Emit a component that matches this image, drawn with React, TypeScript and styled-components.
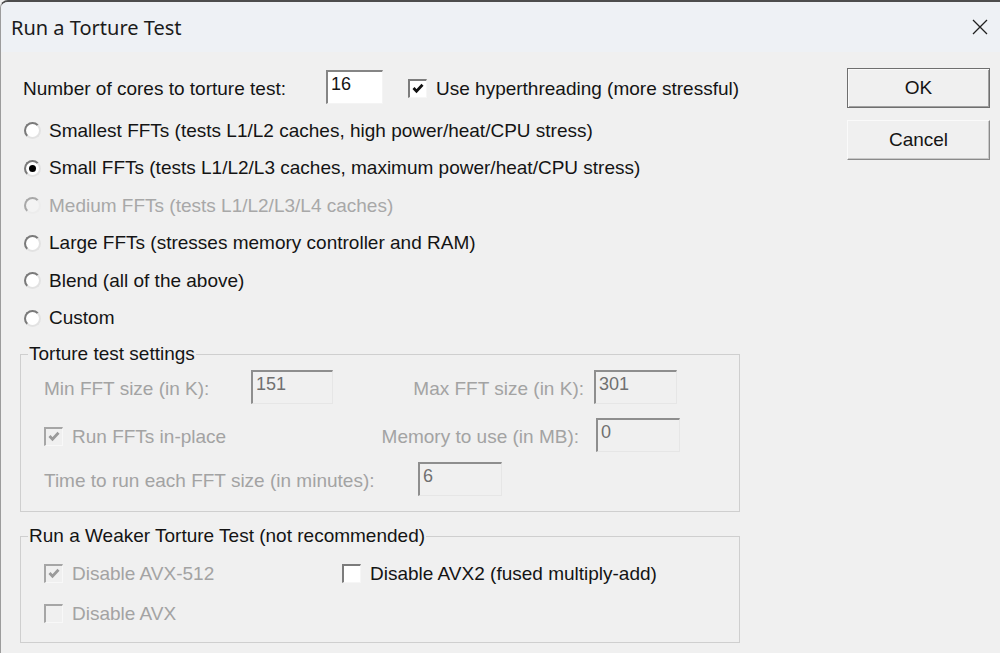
import React from 'react';
import styled, { createGlobalStyle } from 'styled-components';

const GlobalStyle = createGlobalStyle`
  html, body { margin: 0; padding: 0; background: #f0f0f0; }
  body { font-family: "Liberation Sans", Arial, sans-serif; }
`;

const Window = styled.div`
  width: 1000px;
  height: 653px;
  box-sizing: border-box;
  display: flex;
  flex-direction: column;
  overflow: hidden;
  background: #f0f0f0;
  border-top: 2px solid #4d4d4d;
  border-left: 1px solid #9c9c9c;
  border-top-left-radius: 8px;
  font-size: 19px;
  color: #141414;
`;

const TitleBar = styled.header`
  flex: none;
  height: 50px;
  display: flex;
  align-items: center;
  justify-content: space-between;
  padding: 0 12px 0 10px;
  background: #eef1f5;
  font-family: "Noto Sans", "Open Sans", sans-serif;
  font-size: 20px;
  color: #1b1b1b;
`;

const CloseButton = styled.button`
  border: 0;
  background: none;
  padding: 0;
  display: flex;
  color: #202020;
`;

const Body = styled.div`
  flex: 1;
  display: flex;
  padding-right: 10px;
`;

const Main = styled.div`
  width: 720px;
  padding: 18px 0 0 19px;
  display: flex;
  flex-direction: column;
`;

const Buttons = styled.div`
  margin-left: auto;
  width: 143px;
  padding-top: 16px;
  display: flex;
  flex-direction: column;
  gap: 12px;
`;

const Button = styled.button<{ $default?: boolean }>`
  height: 40px;
  box-sizing: border-box;
  background: #f0f0f0;
  font-family: inherit;
  font-size: 19px;
  color: #141414;
  border: 1px solid;
  border-color: ${(p) => (p.$default ? '#6f6f6f' : '#fafafa #8a8a8a #8a8a8a #fafafa')};
  box-shadow: ${(p) =>
    p.$default ? 'inset 1px 1px 0 #fafafa, inset -1px -1px 0 #a0a0a0' : 'inset -1px -1px 0 #c8c8c8'};
`;

const Row = styled.div<{ $indent?: number }>`
  display: flex;
  align-items: center;
  height: 34px;
  padding-left: ${(p) => p.$indent ?? 0}px;
`;

const Label = styled.span<{ $width?: number; $right?: number; $disabled?: boolean }>`
  flex: none;
  width: ${(p) => (p.$width ? `${p.$width}px` : 'auto')};
  box-sizing: border-box;
  text-align: ${(p) => (p.$right !== undefined ? 'right' : 'left')};
  padding-right: ${(p) => p.$right ?? 0}px;
  padding-top: 4px;
  white-space: nowrap;
  color: ${(p) => (p.$disabled ? '#a3a3a3' : '#141414')};
`;

const Field = styled.div<{ $width: number; $disabled?: boolean }>`
  flex: none;
  width: ${(p) => p.$width}px;
  height: 34px;
  box-sizing: border-box;
  padding: 0 3px;
  line-height: 24px;
  font-size: 18px;
  background: ${(p) => (p.$disabled ? '#f0f0f0' : '#ffffff')};
  color: ${(p) => (p.$disabled ? '#707070' : '#141414')};
  border-style: solid;
  border-width: 2px 1px 1px 2px;
  border-color: ${(p) =>
    p.$disabled ? '#8e8e8e #e6e6e6 #e6e6e6 #8e8e8e' : '#858585 #f4f4f4 #f4f4f4 #858585'};
`;

const CheckItem = styled.label<{ $width?: number; $gap?: number }>`
  flex: none;
  display: flex;
  align-items: center;
  gap: ${(p) => p.$gap ?? 9}px;
  width: ${(p) => (p.$width ? `${p.$width}px` : 'auto')};
`;

const Box = styled.span<{ $disabled?: boolean }>`
  flex: none;
  width: 19px;
  height: 19px;
  margin-top: 2px;
  box-sizing: border-box;
  display: flex;
  align-items: center;
  justify-content: center;
  background: ${(p) => (p.$disabled ? '#f0f0f0' : '#ffffff')};
  border-style: solid;
  border-width: 2px 1px 1px 2px;
  border-color: ${(p) =>
    p.$disabled ? '#a6a6a6 #f8f8f8 #f8f8f8 #a6a6a6' : '#7c7c7c #f6f6f6 #f6f6f6 #7c7c7c'};
  color: ${(p) => (p.$disabled ? '#9a9a9a' : '#111')};
`;

const RadioList = styled.div`
  margin-top: 8px;
  display: flex;
  flex-direction: column;
`;

const RadioRow = styled.label<{ $disabled?: boolean }>`
  height: 37.5px;
  display: flex;
  align-items: center;
  gap: 8px;
  padding-left: 4px;
  white-space: nowrap;
  color: ${(p) => (p.$disabled ? '#a8a8a8' : '#141414')};
`;

const Radio = styled.span<{ $checked?: boolean; $disabled?: boolean }>`
  flex: none;
  position: relative;
  width: 17px;
  height: 17px;
  box-sizing: border-box;
  border-radius: 50%;
  background: ${(p) => (p.$disabled ? '#f3f3f3' : '#ffffff')};
  border: 2px solid;
  border-color: ${(p) =>
    p.$disabled ? '#a8a8a8 #ececec #ececec #a8a8a8' : '#7a7a7a #e2e2e2 #e2e2e2 #7a7a7a'};
  &::after {
    content: '';
    display: ${(p) => (p.$checked ? 'block' : 'none')};
    position: absolute;
    left: 50%;
    top: 50%;
    width: 7px;
    height: 7px;
    margin: -3.5px 0 0 -3.5px;
    border-radius: 50%;
    background: #000;
  }
`;

const Group = styled.fieldset<{ $top: number; $pad: string }>`
  margin: ${(p) => p.$top}px 0 0;
  padding: ${(p) => p.$pad};
  border: 1px solid #cfcfcf;
  display: flex;
  flex-direction: column;
  min-width: 0;
`;

const Legend = styled.legend`
  margin-left: -16px;
  padding: 0 1px;
  line-height: 20px;
  color: #141414;
`;

const GroupRows = styled.div<{ $gap: number[] }>`
  display: flex;
  flex-direction: column;
  & > :nth-child(2) { margin-top: ${(p) => p.$gap[0]}px; }
  & > :nth-child(3) { margin-top: ${(p) => p.$gap[1] ?? 0}px; }
`;

const Check = ({ checked, disabled }: { checked?: boolean; disabled?: boolean }) => (
  <Box $disabled={disabled}>
    {checked && (
      <svg width="12" height="11" viewBox="0 0 12 11">
        <path d="M1.5 5 L4.5 8.2 L10.5 1.8" fill="none" stroke="currentColor" strokeWidth="2.8" />
      </svg>
    )}
  </Box>
);

const radios = [
  { text: 'Smallest FFTs (tests L1/L2 caches, high power/heat/CPU stress)' },
  { text: 'Small FFTs (tests L1/L2/L3 caches, maximum power/heat/CPU stress)', checked: true },
  { text: 'Medium FFTs (tests L1/L2/L3/L4 caches)', disabled: true },
  { text: 'Large FFTs (stresses memory controller and RAM)' },
  { text: 'Blend (all of the above)' },
  { text: 'Custom' },
];

const App: React.FC = () => (
  <>
    <GlobalStyle />
    <Window>
      <TitleBar>
        <span>Run a Torture Test</span>
        <CloseButton aria-label="Close">
          <svg width="16" height="16" viewBox="0 0 16 16">
            <path d="M1 1 L15 15 M15 1 L1 15" stroke="currentColor" strokeWidth="1.3" />
          </svg>
        </CloseButton>
      </TitleBar>
      <Body>
        <Main>
          <Row $indent={3}>
            <Label $width={303}>Number of cores to torture test:</Label>
            <Field $width={57}>16</Field>
            <CheckItem style={{ marginLeft: 25 }}>
              <Check checked />
              <Label>Use hyperthreading (more stressful)</Label>
            </CheckItem>
          </Row>

          <RadioList>
            {radios.map((r) => (
              <RadioRow key={r.text} $disabled={r.disabled}>
                <Radio $checked={r.checked} $disabled={r.disabled} />
                <span>{r.text}</span>
              </RadioRow>
            ))}
          </RadioList>

          <Group $top={7} $pad="6px 23px 15px">
            <Legend>Torture test settings</Legend>
            <GroupRows $gap={[14, 10]}>
              <Row>
                <Label $width={207} $disabled>Min FFT size (in K):</Label>
                <Field $width={82} $disabled>151</Field>
                <Label $width={261} $right={10} $disabled>Max FFT size (in K):</Label>
                <Field $width={83} $disabled>301</Field>
              </Row>
              <Row>
                <CheckItem $width={330}>
                  <Check checked disabled />
                  <Label $disabled>Run FFTs in-place</Label>
                </CheckItem>
                <Label $width={222} $right={17} $disabled>Memory to use (in MB):</Label>
                <Field $width={84} $disabled>0</Field>
              </Row>
              <Row>
                <Label $width={374} $disabled>Time to run each FFT size (in minutes):</Label>
                <Field $width={84} $disabled>6</Field>
              </Row>
            </GroupRows>
          </Group>

          <Group $top={14} $pad="9px 23px 13px">
            <Legend>Run a Weaker Torture Test (not recommended)</Legend>
            <GroupRows $gap={[6]}>
              <Row>
                <CheckItem $width={298}>
                  <Check checked disabled />
                  <Label $disabled>Disable AVX-512</Label>
                </CheckItem>
                <CheckItem>
                  <Check />
                  <Label>Disable AVX2 (fused multiply-add)</Label>
                </CheckItem>
              </Row>
              <Row>
                <CheckItem>
                  <Check disabled />
                  <Label $disabled>Disable AVX</Label>
                </CheckItem>
              </Row>
            </GroupRows>
          </Group>
        </Main>
        <Buttons>
          <Button $default>OK</Button>
          <Button>Cancel</Button>
        </Buttons>
      </Body>
    </Window>
  </>
);

export default App;
